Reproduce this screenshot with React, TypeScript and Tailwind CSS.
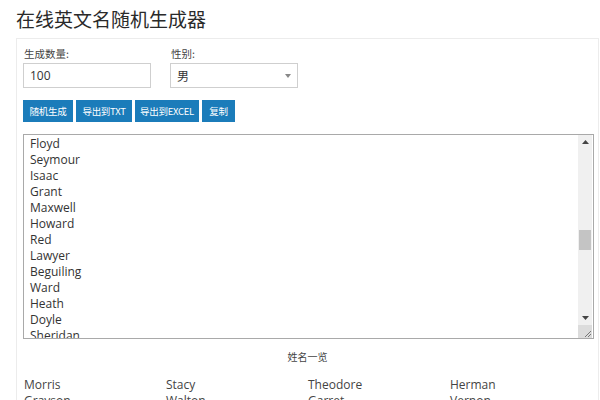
import React from 'react';

const listNames = [
  'Floyd', 'Seymour', 'Isaac', 'Grant', 'Maxwell', 'Howard', 'Red',
  'Lawyer', 'Beguiling', 'Ward', 'Heath', 'Doyle', 'Sheridan', 'Morris',
];

const gridNames = [
  'Morris', 'Stacy', 'Theodore', 'Herman',
  'Grayson', 'Walton', 'Garret', 'Vernon',
];

const cjk = { fontFamily: '"Noto Sans CJK SC", "Open Sans", sans-serif' };
const latin = { fontFamily: '"Open Sans", "Noto Sans CJK SC", sans-serif' };

const Btn: React.FC<{ label: string; w: string }> = ({ label, w }) => (
  <button
    className={`h-[22px] ${w} bg-[#1b7cba] text-white text-[9.5px] leading-[22px] tracking-[-0.3px] text-center`}
    style={cjk}
  >
    {label}
  </button>
);

const App: React.FC = () => {
  return (
    <div className="w-[600px] h-[400px] overflow-hidden bg-white text-[#333]" style={cjk}>
      {/* Title */}
      <h1 className="pl-[16px] pt-[6px] h-[38px] text-[19px] leading-[26px] text-[#2a2a2a]">
        在线英文名随机生成器
      </h1>

      {/* Panel */}
      <div className="ml-[16px] mr-[1px] border border-[#ececec] px-[6px] pt-[8px] h-[400px]">
        <div className="flex gap-[19px]">
          <div className="flex flex-col">
            <label className="text-[10.5px] leading-[14px] text-[#444] pl-[1px]">生成数量:</label>
            <div
              className="mt-[2px] w-[128px] h-[25px] border border-[#cfcfcf] pl-[6px] text-[12px] leading-[23px] text-[#333]"
              style={latin}
            >
              100
            </div>
          </div>
          <div className="flex flex-col">
            <label className="text-[10.5px] leading-[14px] text-[#444] pl-[1px]">性别:</label>
            <div className="mt-[2px] w-[128px] h-[25px] border border-[#cfcfcf] pl-[6px] pr-[6px] flex items-center justify-between">
              <span className="text-[12px] text-[#333]">男</span>
              <svg width="6" height="4" viewBox="0 0 6 4">
                <path d="M0 0 L6 0 L3 4 Z" fill="#888" />
              </svg>
            </div>
          </div>
        </div>

        {/* Buttons */}
        <div className="flex gap-[3px] mt-[12px]">
          <Btn label="随机生成" w="w-[50px]" />
          <Btn label="导出到TXT" w="w-[56px]" />
          <Btn label="导出到EXCEL" w="w-[64px]" />
          <Btn label="复制" w="w-[33px]" />
        </div>

        {/* Textarea */}
        <div className="mt-[12px] w-[571px] h-[205px] border border-[#a9a9a9] flex">
          <div className="flex-1 overflow-hidden pl-[6px] pt-[1px] text-[12px] leading-[16px] text-[#333]" style={latin}>
            {listNames.map((n) => (
              <div key={n}>{n}</div>
            ))}
          </div>
          <div className="w-[14px] flex flex-col bg-[#f0f0f0] mr-[1px]">
            <div className="h-[14px] flex items-center justify-center">
              <svg width="7" height="4" viewBox="0 0 7 4">
                <path d="M0 4 L7 4 L3.5 0 Z" fill="#444" />
              </svg>
            </div>
            <div className="flex-1 relative">
              <div className="absolute left-[1px] right-[1px] top-[81px] h-[20px] bg-[#c4c4c4]" />
            </div>
            <div className="h-[14px] flex items-center justify-center">
              <svg width="7" height="4" viewBox="0 0 7 4">
                <path d="M0 0 L7 0 L3.5 4 Z" fill="#444" />
              </svg>
            </div>
            <div className="h-[13px] bg-[#dcdcdc] flex items-end justify-end">
              <svg width="9" height="9" viewBox="0 0 9 9">
                <path d="M8 2 L2 8 M8 5 L5 8" stroke="#777" strokeWidth="1" />
              </svg>
            </div>
          </div>
        </div>

        {/* Name list heading */}
        <div className="mt-[11px] text-center text-[10px] leading-[14px] text-[#444]">姓名一览</div>

        <div className="mt-[13px] pl-[1px] grid grid-cols-4 text-[12px] leading-[16px] text-[#444]" style={latin}>
          {gridNames.map((n) => (
            <div key={n}>{n}</div>
          ))}
        </div>
      </div>
    </div>
  );
};

export default App;
